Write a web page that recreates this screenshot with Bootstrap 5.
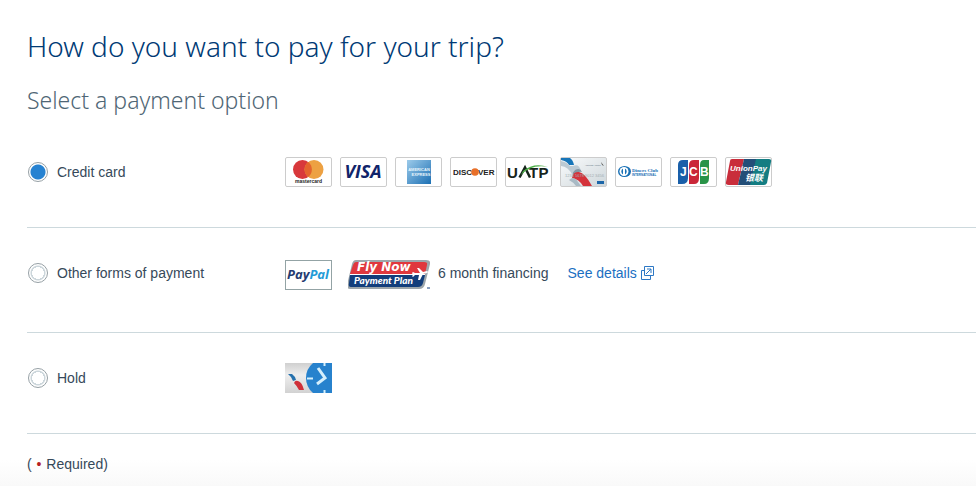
<!DOCTYPE html>
<html lang="en">
<head>
<meta charset="utf-8">
<meta name="viewport" content="width=device-width, initial-scale=1">
<title>Payment options</title>
<link href="https://cdn.jsdelivr.net/npm/bootstrap@5.3.0/dist/css/bootstrap.min.css" rel="stylesheet">
<style>
body { font: 14px/20px "Liberation Sans", Arial, sans-serif; color: #36495a; background: #fff; }
.pay-page { padding: 26px 0 0 27px; min-height: 100vh; background: linear-gradient(to top, #f9f9f9, #fff 26px); }
.pay-title { font: 300 28px/40px "Noto Sans", "Open Sans", sans-serif; color: #003a75; margin: 0 0 16px; }
.pay-subtitle { font: 300 23px/36px "Noto Sans", "Open Sans", sans-serif; color: #4f6675; margin: 0 0 9px; }
.pay-option { padding: 30px 0 40px; border-bottom: 1px solid #cdd9dd; }
.pay-choice { width: 258px; height: 30px; gap: 9px; padding-left: 1px; }
.pay-choice input { appearance: none; width: 20px; height: 20px; margin: 0; border: 1px solid #96a0a5; border-radius: 50%; background: radial-gradient(circle, #fff 6px, #ccd6db 6px, #ccd6db 7px, #fff 8px); }
.pay-choice input:checked { background: radial-gradient(circle, #2682d1 6px, #2682d1 7px, #fff 8px); }
.pay-finance { height: 30px; padding-left: 8px; gap: 19px; }
.pay-details { color: #1b6fc2; gap: 4px; }
.pay-note { padding: 20px 0 12px; }
.pay-dot { color: #b61f23; margin: 0 1px; }
svg { display: block; flex: none; }
svg text { font-family: "Liberation Sans", Arial, sans-serif; }
</style>
<script src="https://cdn.jsdelivr.net/npm/bootstrap@5.3.0/dist/js/bootstrap.bundle.min.js"></script>
</head>
<body>
<main class="pay-page">
<h1 class="pay-title">How do you want to pay for your trip?</h1>
<h2 class="pay-subtitle">Select a payment option</h2>
<form>
  <div class="pay-option d-flex align-items-start">
    <div class="pay-choice d-flex align-items-center flex-shrink-0">
      <input type="radio" name="payment" id="credit" checked><label for="credit">Credit card</label>
    </div>
    <div class="d-flex flex-wrap gap-2">
      <svg width="47" height="30" role="img" aria-label="Mastercard"><rect x=".5" y=".5" width="46" height="29" rx="1.5" fill="#fff" stroke="#ccc"/><circle cx="17.500" cy="12.500" r="9.500" fill="#d8383b"/><circle cx="29" cy="12.500" r="9.500" fill="#eda142"/><path d="M23.200 5a9.500 9.500 0 0 1 0 15a9.500 9.500 0 0 1 0-15z" fill="#e4642d"/><text x="23.500" y="26" font-size="5" font-weight="700" text-anchor="middle" fill="#222">mastercard</text></svg>
      <svg width="47" height="30" role="img" aria-label="Visa"><rect x=".5" y=".5" width="46" height="29" rx="1.5" fill="#fff" stroke="#ccc"/><text x="23" y="21" font-size="18" font-weight="700" font-style="italic" text-anchor="middle" fill="#10246a" style="font-family:'Open Sans',sans-serif">VISA</text></svg>
      <svg width="47" height="30" role="img" aria-label="American Express"><defs><linearGradient id="ax" x2="1" y2="1"><stop stop-color="#9dcbea"/><stop offset="1" stop-color="#1c70b4"/></linearGradient></defs><rect x=".5" y=".5" width="46" height="29" rx="1.5" fill="#fff" stroke="#ccc"/><path fill="url(#ax)" d="M12 3h24v24H12z"/><g font-weight="700" fill="#e9f5fc" text-anchor="middle"><text x="24" y="14" font-size="4">AMERICAN</text><text x="26" y="19" font-size="4">EXPRESS</text></g></svg>
      <svg width="47" height="30" role="img" aria-label="Discover"><rect x=".5" y=".5" width="46" height="29" rx="1.5" fill="#fff" stroke="#ccc"/><g font-size="8" font-weight="700" fill="#222" style="font-family:Lato,sans-serif"><text x="3" y="18">DISC</text><text x="28" y="18">VER</text></g><circle cx="25" cy="15" r="3.800" fill="#e8702a"/></svg>
      <svg width="47" height="30" role="img" aria-label="UATP"><rect x=".5" y=".5" width="46" height="29" rx="1.5" fill="#fff" stroke="#ccc"/><g font-size="15" font-weight="700" fill="#16241b"><text x="2" y="20.500">U</text><text x="24" y="20.500">T</text><text x="33.500" y="20.500">P</text></g><path d="M14.500 20.500l5.500-10 5 10" fill="none" stroke="#16241b" stroke-width="2.500"/><path d="M16 18q10-11 27-8q-14-5-25 4z" fill="#4dad48"/></svg>
      <svg width="47" height="30" role="img" aria-label="American Airlines card"><defs><linearGradient id="aa" x2="1" y2="1"><stop stop-color="#fafcfd"/><stop offset="1" stop-color="#ced6da"/></linearGradient></defs><rect x=".5" y=".5" width="46" height="29" rx="1.5" fill="url(#aa)" stroke="#ccc"/><path d="M1 1h9q3 2 4 7H9Q7 4 1 3z" fill="#1876b9"/><path d="M1 4q6 1 9 5h3q6-3 8 5l-6-1q-3 2-2 6Q8 9 1 9z" fill="#bccad3"/><path d="M15 13q5-3 7 2-5-1-7 5l-2-1q-1-4 2-6z" fill="#8496a3"/><path d="M12 21q1-7 7-6 6 1 13 14h-9q-4-7-11-8z" fill="#d4333b"/><path d="M12 21q4 0 6 4l3 4h-5q-3-4-7-6z" fill="#a9bac5"/><text x="25" y="9" font-size="2" fill="#567">American Airlines</text><path d="M41 5l3 4-2-1z" fill="#555"/><text x="5" y="20" font-size="4" fill="#a3aeb3">1234 5678 9012 3456</text><rect x="37" y="24" width="7" height="3" fill="#1c66a8"/></svg>
      <svg width="47" height="30" role="img" aria-label="Diners Club International"><rect x=".5" y=".5" width="46" height="29" rx="1.5" fill="#fff" stroke="#ccc"/><ellipse cx="9.500" cy="14.500" rx="6.500" ry="5.500" fill="#1870b5"/><circle cx="9" cy="14.500" r="4.500" fill="#fff"/><path d="M8 11.500a3.500 3.500 0 0 0 0 6zm2 0v6a3.500 3.500 0 0 0 0-6z" fill="#1870b5"/><text x="17" y="14.500" font-size="5" font-weight="700" fill="#1870b5" style="font-family:'Liberation Serif',serif">Diners Club</text><text x="17" y="18.500" font-size="3" font-weight="700" fill="#1870b5">INTERNATIONAL</text></svg>
      <svg width="47" height="30" role="img" aria-label="JCB"><rect x=".5" y=".5" width="46" height="29" rx="1.5" fill="#fff" stroke="#ccc"/><path d="M13 3h5v18q0 6-6 6H8V8q0-5 5-5z" fill="#195fa9"/><path d="M24 3h5v18q0 6-5 6h-5V8q0-5 5-5z" fill="#ca2638"/><path d="M35 3h4v18q0 6-5 6h-4V8q0-5 4-5z" fill="#299348"/><g fill="#fff" font-size="12" font-weight="700"><text x="10" y="19">J</text><text x="19" y="19">C</text><text x="30" y="19">B</text></g></svg>
      <svg width="47" height="30" role="img" aria-label="UnionPay"><rect x=".5" y=".5" width="46" height="29" rx="1.5" fill="#fff" stroke="#ccc"/><path d="M7 2h12l-6 26H4q-4 0-3-3L5 4q0-2 2-2z" fill="#c92d3b"/><path d="M19 2h13l-6 26H13z" fill="#234e78"/><path d="M31 2h13q3 0 2 3l-4 21q-1 2-3 2H25z" fill="#147d82"/><text x="5" y="14" font-size="8" font-weight="700" font-style="italic" fill="#fff">UnionPay</text><text x="20" y="24" font-size="9" font-weight="700" font-style="italic" fill="#fff" style="font-family:'Noto Sans CJK SC',sans-serif">银联</text></svg>
    </div>
  </div>
  <div class="pay-option d-flex align-items-start">
    <div class="pay-choice d-flex align-items-center flex-shrink-0">
      <input type="radio" name="payment" id="other"><label for="other">Other forms of payment</label>
    </div>
    <div class="d-flex align-items-start">
      <svg width="47" height="34" role="img" aria-label="PayPal"><rect x=".5" y="2.500" width="46" height="29" fill="#fff" stroke="#93a3a5"/><text x="2" y="21" font-size="13" font-weight="700" font-style="italic" fill="#253b70" style="font-family:'Open Sans',sans-serif">Pay<tspan fill="#239bd7">Pal</tspan></text></svg>
      <svg class="ms-3" width="82" height="34" viewBox="2 0 82 34" role="img" aria-label="Fly Now Payment Plan"><path d="M10 2h70q5 0 4 4l-5 20q-1 5-6 5H4q-4 0-3-4L6 6q1-4 4-4z" fill="#9da6ab"/><path d="M10 4h68q4 0 3 3l-2 9H4l3-9q1-3 3-3z" fill="#e0383e"/><path d="M4 17h75l-2 8q-1 4-5 4H5q-3 0-2-4z" fill="#123d7b"/><path d="M4 16.500h75" stroke="#fff"/><text x="11" y="13" font-size="12" font-weight="700" font-style="italic" fill="#fff" style="font-family:'DejaVu Sans',sans-serif">Fly Now</text><text x="8" y="26" font-size="10" font-weight="900" font-style="italic" fill="#fff" style="font-family:Lato,sans-serif">Payment Plan</text><path d="M69 15h5l-3-5h2l4 4 4-1q2 1 0 2l-4 1-3 6h-2l1-5h-4l-2 2-1-1 1-1-1-2 1-1z" fill="#fff"/><path d="M81 30h3" stroke="#123d7b"/></svg>
      <div class="pay-finance d-flex align-items-center"><span>6 month financing</span>
      <a class="pay-details d-flex align-items-center text-decoration-none" href="#details">See details <svg width="13" height="14" aria-hidden="true" fill="none" stroke="#2d78c5"><path d="M3.500.5h9v9h-9zM3.500 4.500h-3v9h9v-4M5 8l5-5M6 3h4v4"/></svg></a></div>
    </div>
  </div>
  <div class="pay-option d-flex align-items-start">
    <div class="pay-choice d-flex align-items-center flex-shrink-0">
      <input type="radio" name="payment" id="hold"><label for="hold">Hold</label>
    </div>
    <svg width="47" height="30" role="img" aria-label="Hold your trip"><defs><linearGradient id="hg" x2="0" y2="1"><stop stop-color="#d0d0d0"/><stop offset=".4" stop-color="#eee"/><stop offset="1" stop-color="#d2d2d2"/></linearGradient></defs><path fill="url(#hg)" d="M0 0h47v30H0z"/><path d="M28 0h19v30H28Q21 24 21 15T28 0z" fill="#2782cd"/><path d="M3 11h4q3 2 4 6l-3 1q-1-4-5-7z" fill="#2671ad"/><path d="M9 20q1-3 4-2 4 1 6 9h-5q-2-4-5-7z" fill="#cf3039"/><path d="M22 15.500h6M39.500 0v3M39.500 27v3" stroke="#d5effc" stroke-width="2"/><path d="M33 5l7 10-8 6" fill="none" stroke="#d5effc" stroke-width="3"/></svg>
  </div>
</form>
<p class="pay-note m-0">( <span class="pay-dot">•</span> Required)</p>
</main>
</body>
</html>
